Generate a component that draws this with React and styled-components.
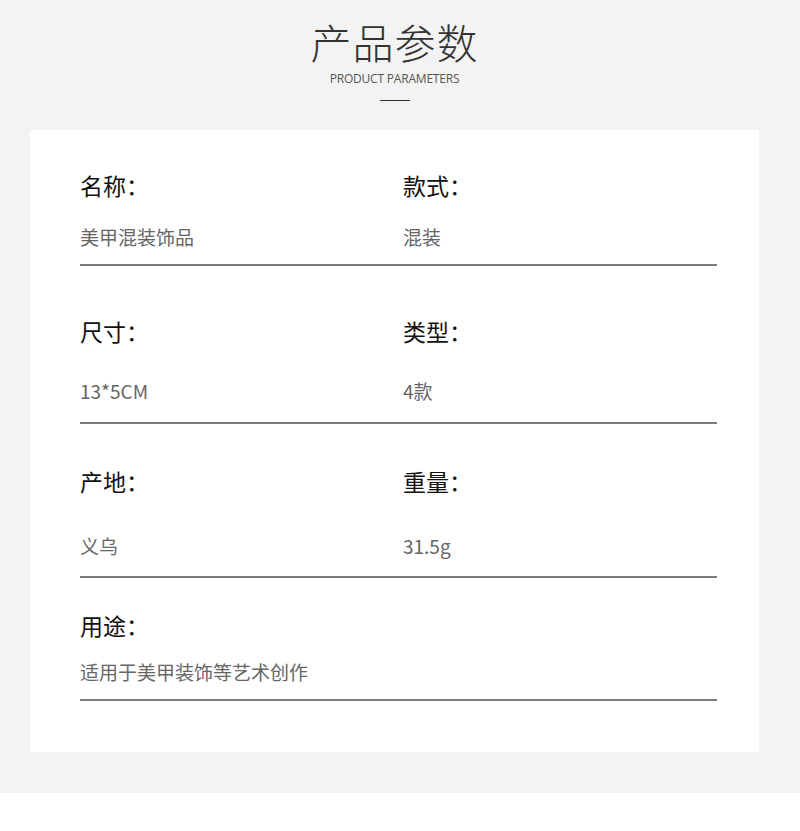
import React from 'react';
import styled, { createGlobalStyle } from 'styled-components';

const GlobalStyle = createGlobalStyle`
  html, body {
    margin: 0;
    padding: 0;
    background: #ffffff;
  }
  body {
    font-family: "Noto Sans CJK SC", "Noto Sans", sans-serif;
  }
`;

const Page = styled.div`
  width: 800px;
  height: 793px;
  background: #f3f3f3;
  box-sizing: border-box;
  padding-top: 19px;
`;

const Header = styled.header`
  display: flex;
  flex-direction: column;
  align-items: center;
  padding-right: 11px;
`;

const Title = styled.h1`
  margin: 0;
  font-size: 41px;
  line-height: 44px;
  font-weight: 300;
  letter-spacing: 1px;
  color: #333;
`;

const Subtitle = styled.div`
  margin-top: 9px;
  font-family: "Open Sans", "Noto Sans", sans-serif;
  font-size: 12px;
  line-height: 14px;
  color: #555;
  letter-spacing: -0.2px;
`;

const Rule = styled.div`
  margin-top: 14px;
  width: 30px;
  height: 1px;
  background: #333;
`;

const Card = styled.section`
  margin: 29px 41px 0 30px;
  height: 622px;
  background: #ffffff;
  box-sizing: border-box;
  padding: 40px 42px 0 50px;
`;

const Row = styled.div`
  padding-top: ${(p) => p.$top}px;
  padding-bottom: ${(p) => p.$bottom}px;
  border-bottom: 2px solid #7b7b7b;
  display: grid;
  grid-template-columns: 323px 1fr;
  row-gap: ${(p) => p.$gap}px;
`;

const Label = styled.div`
  font-size: 23px;
  line-height: 30px;
  color: #111;
`;

const Value = styled.div`
  font-size: 19px;
  line-height: 24px;
  color: #666;
`;

const rows = [
  { top: 0, gap: 25, bottom: 15, items: [['名称：', '美甲混装饰品'], ['款式：', '混装']] },
  { top: 50, gap: 33, bottom: 19, items: [['尺寸：', '13*5CM'], ['类型：', '4款']] },
  { top: 42, gap: 38, bottom: 18, items: [['产地：', '义乌'], ['重量：', '31.5g']] },
  { top: 32, gap: 20, bottom: 15, items: [['用途：', '适用于美甲装饰等艺术创作']] },
];

const App = () => (
  <>
    <GlobalStyle />
    <Page>
      <Header>
        <Title>产品参数</Title>
        <Subtitle>PRODUCT PARAMETERS</Subtitle>
        <Rule />
      </Header>
      <Card>
        {rows.map((row, i) => (
          <Row key={i} $top={row.top} $gap={row.gap} $bottom={row.bottom}>
            {row.items.map(([label]) => (
              <Label key={label}>{label}</Label>
            ))}
            {row.items.length === 1 && <span />}
            {row.items.map(([label, value]) => (
              <Value key={label + 'v'}>{value}</Value>
            ))}
          </Row>
        ))}
      </Card>
    </Page>
  </>
);

export default App;
